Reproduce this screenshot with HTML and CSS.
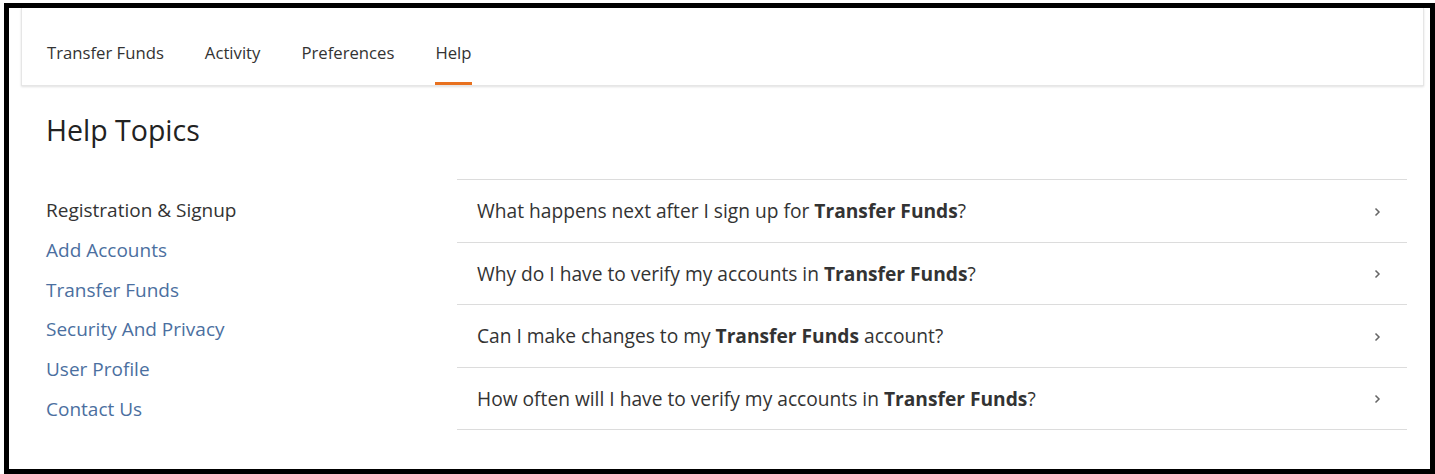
FILE: index.html
```html
<!DOCTYPE html>
<html lang="en">
<head>
<meta charset="utf-8">
<title>Help Topics</title>
<link rel="stylesheet" href="styles.css">
</head>
<body>
<div class="frame">
  <nav class="tabs">
    <a class="tab" href="#">Transfer Funds</a>
    <a class="tab" href="#">Activity</a>
    <a class="tab" href="#">Preferences</a>
    <a class="tab active" href="#">Help</a>
  </nav>
  <main class="content">
    <h1 class="title">Help Topics</h1>
    <div class="columns">
      <ul class="topics">
        <li class="topic current">Registration &amp; Signup</li>
        <li class="topic"><a href="#">Add Accounts</a></li>
        <li class="topic"><a href="#">Transfer Funds</a></li>
        <li class="topic"><a href="#">Security And Privacy</a></li>
        <li class="topic"><a href="#">User Profile</a></li>
        <li class="topic"><a href="#">Contact Us</a></li>
      </ul>
      <ul class="questions">
        <li class="question"><span>What happens next after I sign up for <b>Transfer Funds</b>?</span><svg class="chev" width="7" height="10" viewBox="0 0 7 10"><path d="M1.5 1.5 L5 5 L1.5 8.5" fill="none" stroke="#666" stroke-width="1.5"/></svg></li>
        <li class="question"><span>Why do I have to verify my accounts in <b>Transfer Funds</b>?</span><svg class="chev" width="7" height="10" viewBox="0 0 7 10"><path d="M1.5 1.5 L5 5 L1.5 8.5" fill="none" stroke="#666" stroke-width="1.5"/></svg></li>
        <li class="question"><span>Can I make changes to my <b>Transfer Funds</b> account?</span><svg class="chev" width="7" height="10" viewBox="0 0 7 10"><path d="M1.5 1.5 L5 5 L1.5 8.5" fill="none" stroke="#666" stroke-width="1.5"/></svg></li>
        <li class="question"><span>How often will I have to verify my accounts in <b>Transfer Funds</b>?</span><svg class="chev" width="7" height="10" viewBox="0 0 7 10"><path d="M1.5 1.5 L5 5 L1.5 8.5" fill="none" stroke="#666" stroke-width="1.5"/></svg></li>
      </ul>
    </div>
  </main>
</div>
</body>
</html>
```
FILE: styles.css
```css
html, body {
  margin: 0;
  padding: 0;
  background: #fff;
}
body {
  font-family: "Open Sans", "Liberation Sans", sans-serif;
  color: #333;
  padding: 3px 0 0 4px;
}
.frame {
  box-sizing: border-box;
  height: 471px;
  border: 5px solid #000;
  background: #fff;
}
.tabs {
  display: flex;
  gap: 41px;
  margin: 0 6px 0 12px;
  height: 78px;
  padding: 0 0 0 25px;
  box-sizing: border-box;
  border: 1px solid #e6e6e6;
  border-top: none;
  box-shadow: 0 1px 2px rgba(0,0,0,0.12);
  background: #fff;
}
.tab {
  display: flex;
  align-items: center;
  height: 100%;
  box-sizing: border-box;
  padding-top: 15px;
  font-size: 16.7px;
  color: #333;
  text-decoration: none;
  border-bottom: 3px solid transparent;
}
.tab.active {
  border-bottom-color: #e8711f;
}
.content {
  padding: 0 23px 0 37px;
}
.title {
  margin: 26px 0 0;
  font-size: 28.5px;
  font-weight: 400;
  line-height: 36px;
  color: #222;
}
.columns {
  display: flex;
  margin-top: 31px;
}
.topics {
  list-style: none;
  margin: 12px 0 0;
  padding: 0;
  width: 411px;
  flex: none;
}
.topic {
  font-size: 19px;
  line-height: 39.8px;
  color: #333;
}
.topic a {
  color: #4b6fa0;
  text-decoration: none;
}
.questions {
  list-style: none;
  margin: 0;
  padding: 0;
  flex: 1;
  border-top: 1px solid #dcdcdc;
}
.question {
  display: flex;
  align-items: center;
  justify-content: space-between;
  height: 61.5px;
  padding: 0 26px 0 20px;
  border-bottom: 1px solid #dcdcdc;
  font-size: 19.2px;
  color: #333;
}
.question b {
  font-weight: 700;
}
.chev {
  margin-top: 2px;
}
```
